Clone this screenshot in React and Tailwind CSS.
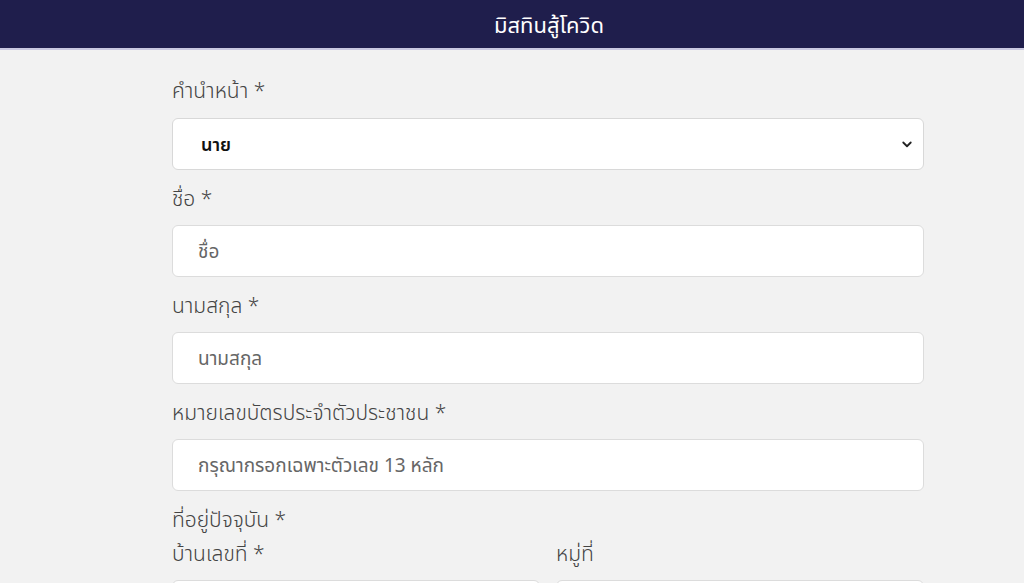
import React from "react";

const font = { fontFamily: '"Noto Sans", "Noto Sans Thai", "Liberation Sans", sans-serif' };

function Label({ children, className = "" }) {
  return (
    <div className={"h-[28px] leading-[28px] text-[21px] font-light text-[#444] " + className}>
      {children}
    </div>
  );
}

function Input({ placeholder }) {
  return (
    <div className="h-[52px] rounded-[6px] border border-[#dcdcdc] bg-white flex items-center pl-[25px] text-[19px] text-[#666]">
      {placeholder}
    </div>
  );
}

export default function App() {
  return (
    <div className="min-h-[583px] bg-[#f2f2f2]" style={font}>
      <div className="h-[48px] bg-[#1f1e4c] flex items-center justify-center pl-[74px] text-white text-[22px]">
        มิสทินสู้โควิด
      </div>
      <div className="h-[2px] bg-[#c9c8e0]" />
      <div className="w-[752px] ml-[172px] pt-[26px]">
        <Label>คำนำหน้า *</Label>
        <div className="mt-[14px] h-[52px] rounded-[6px] border border-[#d8d8d8] bg-white flex items-center justify-between pl-[28px] pr-[10px] text-[18px] font-semibold text-[#111]">
          <span>นาย</span>
          <svg width="12" height="12" viewBox="0 0 16 16" fill="none" stroke="#222" strokeWidth="2.4" strokeLinecap="round" strokeLinejoin="round">
            <path d="M3 6l5 5 5-5" />
          </svg>
        </div>
        <Label className="mt-[14px]">ชื่อ *</Label>
        <div className="mt-[13px]"><Input placeholder="ชื่อ" /></div>
        <Label className="mt-[14px]">นามสกุล *</Label>
        <div className="mt-[13px]"><Input placeholder="นามสกุล" /></div>
        <Label className="mt-[14px]">หมายเลขบัตรประจำตัวประชาชน *</Label>
        <div className="mt-[13px]"><Input placeholder="กรุณากรอกเฉพาะตัวเลข 13 หลัก" /></div>
        <Label className="mt-[14px]">ที่อยู่ปัจจุบัน *</Label>
        <div className="mt-[6px] grid grid-cols-2 gap-[16px]">
          <div>
            <Label>บ้านเลขที่ *</Label>
            <div className="mt-[13px]"><Input placeholder="" /></div>
          </div>
          <div>
            <Label>หมู่ที่</Label>
            <div className="mt-[13px]"><Input placeholder="" /></div>
          </div>
        </div>
      </div>
    </div>
  );
}
